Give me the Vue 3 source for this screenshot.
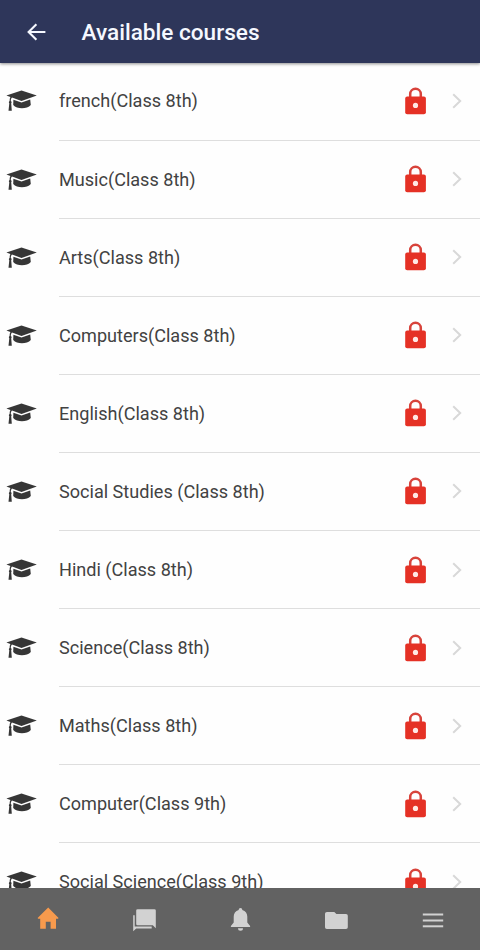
<template>
  <div class="page">
    <header class="toolbar">
      <button class="back" type="button" aria-label="Back">
        <svg width="19" height="18" viewBox="0 0 19 18">
          <path d="M9.4 1.2L1.6 9l7.8 7.8M2 9h16.4" />
        </svg>
      </button>
      <h1 class="title">Available courses</h1>
    </header>

    <main class="content">
      <ul class="list">
        <li v-for="course in courses" :key="course" class="item">
          <svg class="cap" width="32" height="22" viewBox="0 0 32 22">
            <path d="M.4 5.6L15.5 .4l15.3 5.2-15.3 5.3-9.5-3.3c-.9.9-1.2 2-1.2 3.4.9.4 1.1 1.6.4 2.3l.6 7.5H2.5l.8-7.5c-.7-.7-.5-1.9.3-2.3 0-1.6.2-2.8.8-4z" />
            <path d="M7.4 9.8l8.1 2.7L24.2 9.6l.6 5.4c-3.8 4.3-13.8 4.4-17.6 0z" />
          </svg>
          <div class="inner">
            <span class="name">{{ course }}</span>
            <svg class="lock" width="22" height="28" viewBox="0 0 22 28">
              <path class="shackle" d="M5.2 11V7.1a5.3 5.3 0 0 1 10.6 0v3.9" />
              <rect x=".2" y="9.6" width="20.7" height="17.6" rx="2" />
              <circle cx="10.5" cy="18.4" r="2.6" />
            </svg>
            <svg class="chevron" width="10" height="16" viewBox="0 0 10 16">
              <path d="M1.2 1.2L8.2 8l-7 6.8" />
            </svg>
          </div>
        </li>
      </ul>
    </main>

    <nav class="tabs">
      <button
        v-for="tab in tabs"
        :key="tab.name"
        class="tab"
        :class="{ active: tab.name === activeTab }"
        type="button"
        :aria-label="tab.name"
        @click="activeTab = tab.name"
      >
        <svg width="26" height="26" viewBox="0 0 26 26">
          <path v-for="d in tab.paths" :key="d" :d="d" />
        </svg>
      </button>
    </nav>
  </div>
</template>

<script setup>
import { ref } from 'vue';

const courses = [
  'french(Class 8th)',
  'Music(Class 8th)',
  'Arts(Class 8th)',
  'Computers(Class 8th)',
  'English(Class 8th)',
  'Social Studies (Class 8th)',
  'Hindi (Class 8th)',
  'Science(Class 8th)',
  'Maths(Class 8th)',
  'Computer(Class 9th)',
  'Social Science(Class 9th)',
];

const tabs = [
  {
    name: 'Home',
    paths: ['M13.2 .6l10.4 10.3-.6.9h-2v9.9h-5.4v-7h-4.8v7H5.2v-9.9h-2l-.6-.9z'],
  },
  {
    name: 'Messages',
    paths: [
      'M6.6 2.2h16.8q1.4 0 1.4 1.4v17.6l-3-2.9H6.6q-1.4 0-1.4-1.4V3.6q0-1.4 1.4-1.4z',
      'M2.2 8.2h1.5v11.4h17v1.9H5.2l-3 2.8z',
    ],
  },
  {
    name: 'Notifications',
    paths: [
      'M13.5 1c1.1 0 1.8.8 1.8 2 3.3.8 5 3.4 5 6.8v5.7l2.8 3.4v1H3.9v-1l2.8-3.4V9.8c0-3.4 1.7-6 5-6.8 0-1.2.7-2 1.8-2z',
      'M11 21.2h5a2.5 2.5 0 0 1-5 0z',
    ],
  },
  {
    name: 'Files',
    paths: ['M4 5h7.3l2.1 2h9.6q1.8 0 1.8 1.8v11.4q0 1.8-1.8 1.8H3.8Q2 22 2 20.2V6.8Q2 5 4 5z'],
  },
  {
    name: 'More',
    paths: ['M3.8 6.5h20.4v2H3.8z', 'M3.8 12.5h20.4v2H3.8z', 'M3.8 18.3h20.4v2H3.8z'],
  },
];

const activeTab = ref('Home');
</script>

<style>
body {
  margin: 0;
  overflow: hidden;
}
</style>

<style scoped>
.page {
  display: flex;
  flex-direction: column;
  height: 100vh;
  overflow: hidden;
  background: #fefefe;
  font-family: Roboto, 'Liberation Sans', sans-serif;
}

button {
  padding: 0;
  border: 0;
  background: none;
}

.toolbar {
  display: flex;
  flex: none;
  align-items: center;
  height: 63px;
  padding-left: 26.7px;
  box-sizing: border-box;
  background: #2e365a;
  box-shadow: 0 1px 3px rgba(0, 0, 0, 0.45);
  z-index: 1;
}

.back {
  display: flex;
  margin-right: 35.8px;
}

.back path {
  fill: none;
  stroke: #f5f8ff;
  stroke-width: 2.1;
}

.title {
  margin: 0;
  padding-top: 2px;
  color: #f5f8ff;
  font-size: 22.6px;
  font-weight: 500;
  line-height: 28px;
}

.content {
  flex: 1;
  min-height: 0;
  overflow: hidden;
}

.list {
  margin: -0.6px 0 0;
  padding: 0;
  list-style: none;
}

.item {
  display: flex;
  align-items: center;
  height: 78.1px;
  padding-left: 6px;
}

.cap {
  flex: none;
  margin-right: 21px;
  fill: #363636;
}

.inner {
  display: flex;
  flex: 1;
  align-items: center;
  height: 100%;
  padding-right: 18px;
  box-sizing: border-box;
  border-bottom: 1px solid #dedede;
}

.name {
  flex: 1;
  padding-top: 1px;
  color: #424242;
  font-size: 18.08px;
  line-height: 24px;
}

.lock {
  margin-right: 25px;
  fill: #e53125;
}

.lock .shackle {
  fill: none;
  stroke: #d8433b;
  stroke-width: 2.5;
}

.lock circle {
  fill: #ffe9e5;
}

.chevron path {
  fill: none;
  stroke: #d8d8d8;
  stroke-width: 2;
}

.tabs {
  display: flex;
  flex: none;
  height: 62px;
  background: #626262;
  z-index: 1;
}

.tab {
  display: flex;
  flex: 1;
  align-items: center;
  justify-content: center;
  padding-top: 2px;
}

.tab svg {
  fill: #d2d2d2;
}

.tab.active svg {
  fill: #f79a4d;
}
</style>
